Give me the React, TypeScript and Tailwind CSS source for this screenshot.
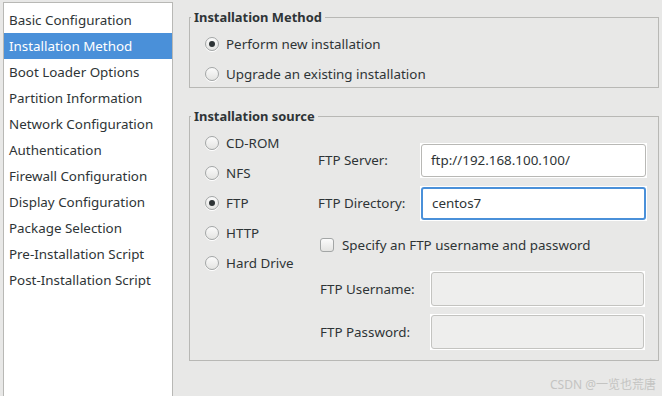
import React from "react";

const navItems = [
  "Basic Configuration",
  "Installation Method",
  "Boot Loader Options",
  "Partition Information",
  "Network Configuration",
  "Authentication",
  "Firewall Configuration",
  "Display Configuration",
  "Package Selection",
  "Pre-Installation Script",
  "Post-Installation Script",
];

const sources = ["CD-ROM", "NFS", "FTP", "HTTP", "Hard Drive"];

const Radio = ({ checked }: { checked?: boolean }) => (
  <span className="flex h-[14px] w-[14px] shrink-0 items-center justify-center rounded-full border border-[#a3a6a6] bg-gradient-to-b from-[#fbfbfb] to-[#e4e4e2] shadow-[0_1px_0_white]">
    {checked && <span className="h-[6px] w-[6px] rounded-full bg-[#2e3436]" />}
  </span>
);

const Frame = ({
  title,
  className,
  children,
}: {
  title: string;
  className: string;
  children: React.ReactNode;
}) => (
  <div className={`relative border border-[#b8b8b5] ${className}`}>
    <span className="absolute -top-[10px] left-[1px] bg-[#e8e8e7] px-[3px] text-[12.9px] font-bold leading-[18px] text-[#2e3436]">
      {title}
    </span>
    {children}
  </div>
);

const Entry = ({
  value,
  focused,
  disabled,
  className,
}: {
  value?: string;
  focused?: boolean;
  disabled?: boolean;
  className: string;
}) => (
  <div className={`bg-white p-px ${className}`}>
    <div
      className={`flex h-full items-center rounded-[3px] px-[9px] text-[#2e3436] ${
        focused
          ? "border-2 border-[#4a90d9] bg-white px-[8px]"
          : disabled
          ? "border border-[#c3c3c0] bg-[#eeeeed]"
          : "border border-[#b8b8b5] bg-white"
      }`}
    >
      {value}
    </div>
  </div>
);

export default function App() {
  return (
    <div
      className="flex h-[396px] w-[662px] overflow-hidden bg-[#e8e8e7] text-[13.4px] text-[#2e3436]"
      style={{ fontFamily: '"Noto Sans", "Noto Sans CJK SC", sans-serif' }}
    >
      <div className="ml-[3px] mt-[2px] h-[400px] w-[170px] shrink-0 border border-b-0 border-[#b8b8b5] bg-white pt-[4px]">
        {navItems.map((item, i) => (
          <div
            key={item}
            className={`flex h-[26px] items-center whitespace-nowrap pl-[5px] ${
              i === 1 ? "bg-[#4a90d9] text-white" : ""
            }`}
          >
            {item}
          </div>
        ))}
      </div>

      <div className="ml-[16px] flex w-[470px] flex-col">
        <Frame title="Installation Method" className="mt-[17px] h-[71px]">
          <div className="flex flex-col gap-[4px] pl-[15px] pt-[13px]">
            <div className="flex h-[26px] items-center gap-[7px]">
              <Radio checked />
              <span>Perform new installation</span>
            </div>
            <div className="flex h-[26px] items-center gap-[7px]">
              <Radio />
              <span>Upgrade an existing installation</span>
            </div>
          </div>
        </Frame>

        <Frame title="Installation source" className="mt-[28px] h-[245px]">
          <div className="flex">
            <div className="flex w-[128px] flex-col pl-[15px] pt-[11px]">
              {sources.map((s) => (
                <div key={s} className="flex h-[30px] items-center gap-[7px]">
                  <Radio checked={s === "FTP"} />
                  <span>{s}</span>
                </div>
              ))}
            </div>

            <div className="flex flex-col pt-[26px]">
              <div className="flex h-[35px] items-center">
                <span className="w-[102px]">FTP Server:</span>
                <Entry value="ftp://192.168.100.100/" className="h-[35px] w-[227px]" />
              </div>
              <div className="mt-[8px] flex h-[35px] items-center">
                <span className="w-[102px]">FTP Directory:</span>
                <Entry value="centos7" focused className="h-[35px] w-[227px]" />
              </div>
              <div className="ml-[2px] mt-[16px] flex h-[16px] items-center gap-[8px]">
                <span className="h-[14px] w-[14px] rounded-[3px] border border-[#a3a6a6] bg-gradient-to-b from-[#fbfbfb] to-[#e4e4e2]" />
                <span>Specify an FTP username and password</span>
              </div>
              <div className="ml-[2px] mt-[18px] flex h-[36px] items-center">
                <span className="w-[110px]">FTP Username:</span>
                <Entry disabled className="h-[36px] w-[215px]" />
              </div>
              <div className="ml-[2px] mt-[7px] flex h-[36px] items-center">
                <span className="w-[110px]">FTP Password:</span>
                <Entry disabled className="h-[36px] w-[215px]" />
              </div>
            </div>
          </div>
        </Frame>

        <div className="mt-[15px] flex justify-end pr-[3px] text-[12px] text-[#c4c4c2]">
          CSDN @一览也荒唐
        </div>
      </div>
    </div>
  );
}
